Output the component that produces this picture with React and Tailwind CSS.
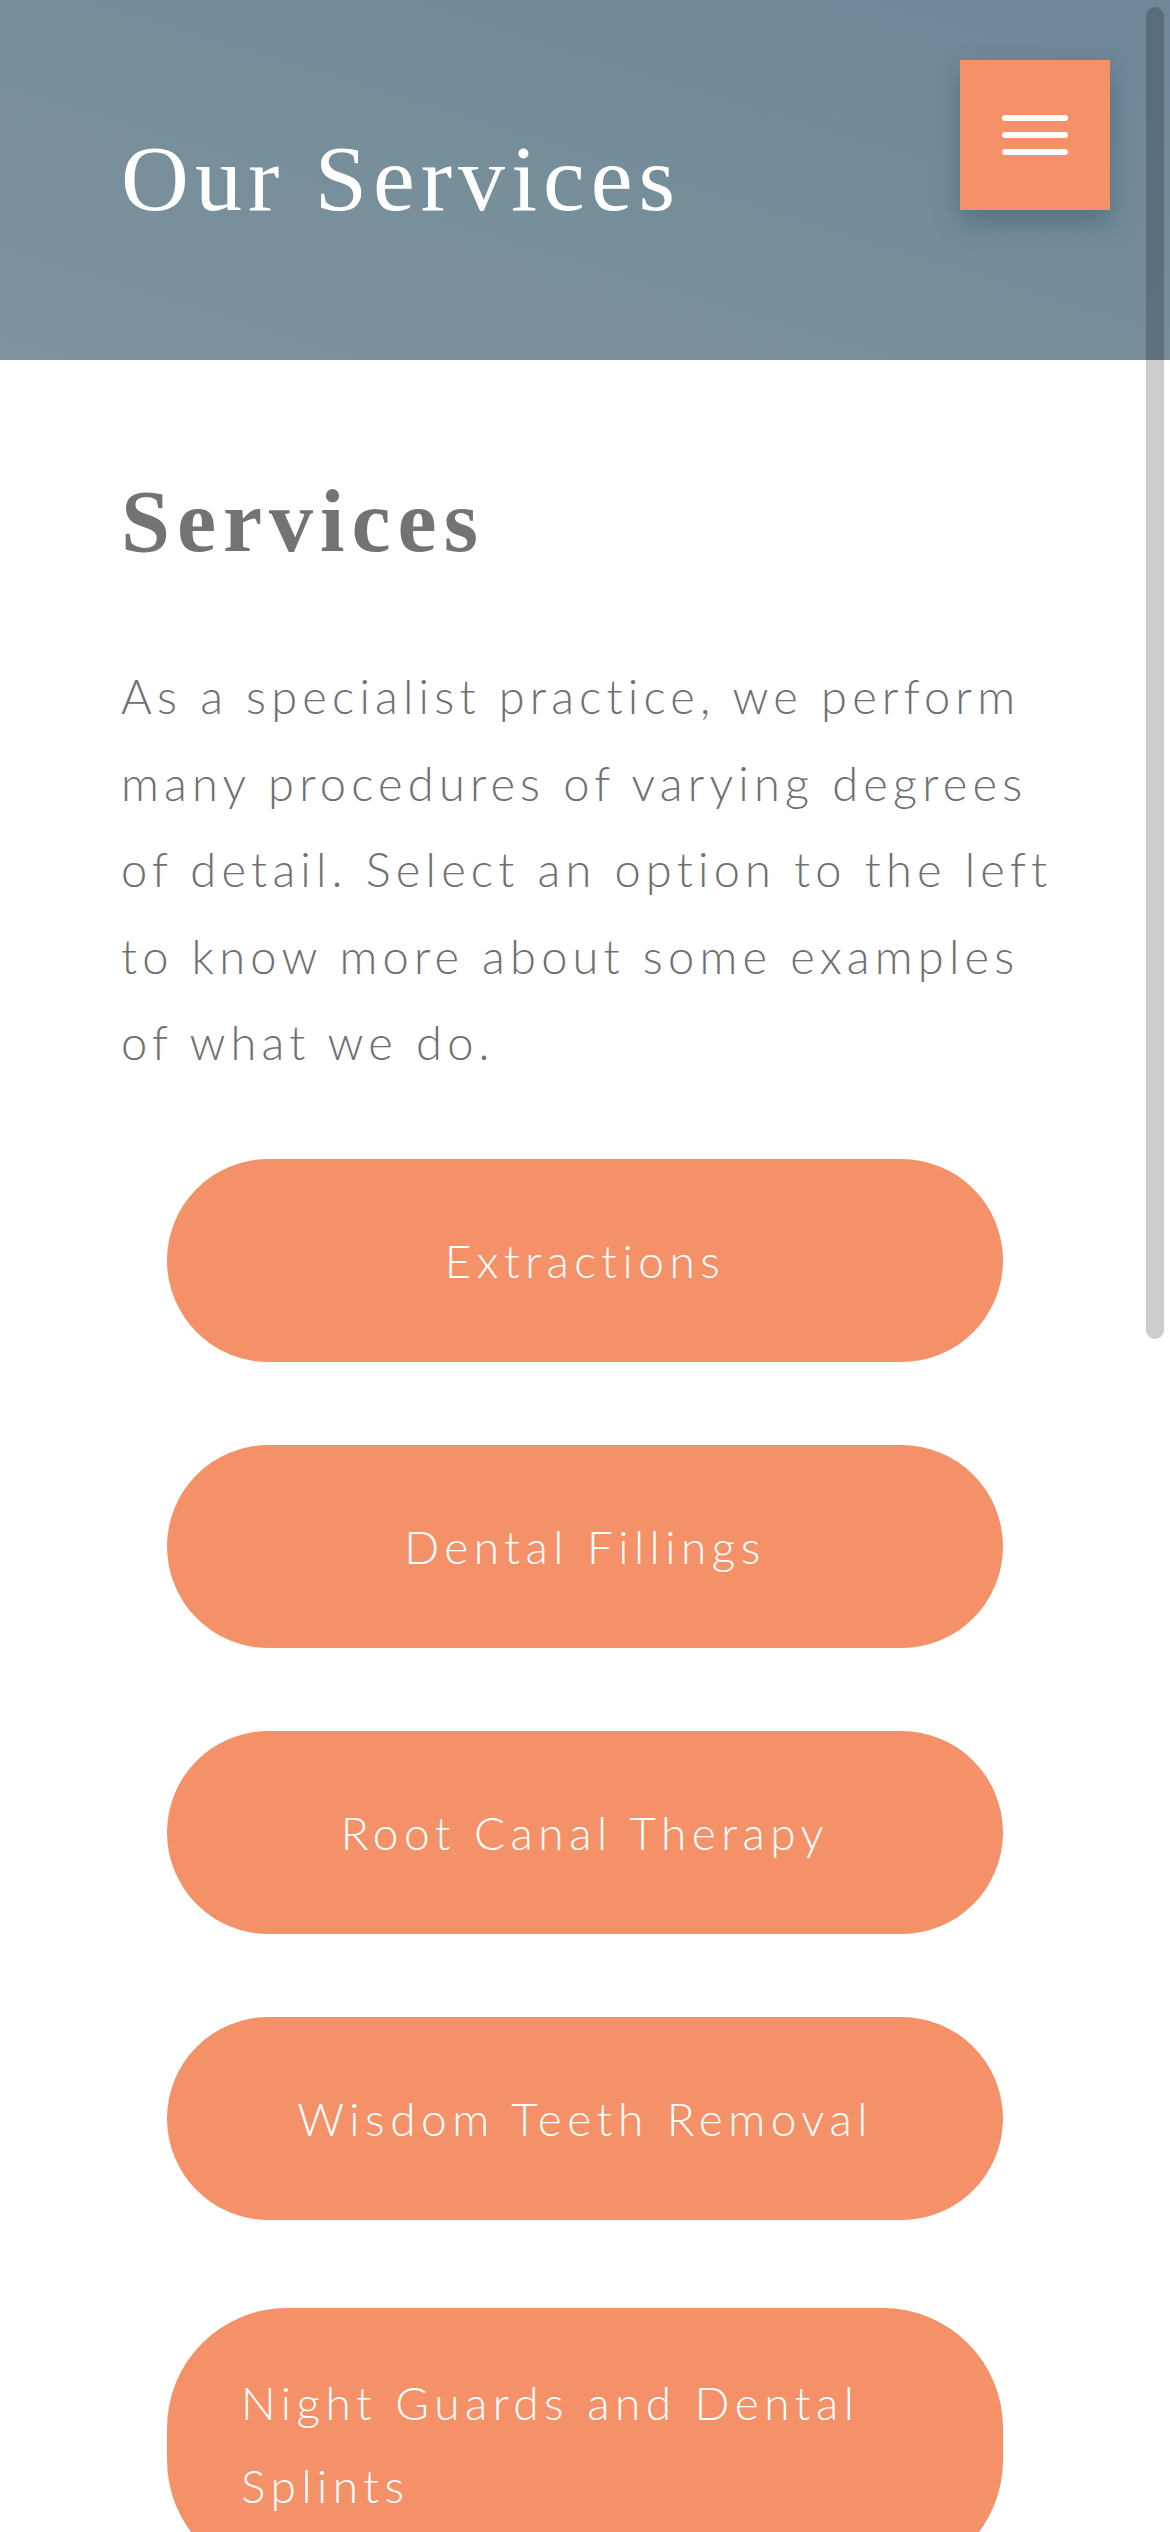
import React from 'react';

const services = [
  'Extractions',
  'Dental Fillings',
  'Root Canal Therapy',
  'Wisdom Teeth Removal',
  'Night Guards and Dental Splints',
];

function MenuButton() {
  return (
    <button className="absolute left-[960px] top-[60px] w-[150px] h-[150px] bg-[#f59168] flex flex-col items-center justify-center gap-[11px] shadow-[0_12px_24px_rgba(40,60,75,0.35)]">
      <span className="block w-[66px] h-[6px] rounded-full bg-white" />
      <span className="block w-[66px] h-[6px] rounded-full bg-white" />
      <span className="block w-[66px] h-[6px] rounded-full bg-white" />
    </button>
  );
}

export default function App() {
  return (
    <div className="relative h-[2532px] overflow-hidden bg-white">
      <header className="relative h-[360px] flex items-center px-[121px] bg-gradient-to-tr from-[#7d949f] via-[#768d9a] to-[#6e8799]">
        <h1 className="text-[94px] leading-none tracking-[6px] text-white font-normal [font-family:'Liberation_Serif',serif] -mt-[4px]">
          Our Services
        </h1>
        <MenuButton />
      </header>

      <main className="px-[121px] pt-[118px]">
        <h2 className="text-[88px] leading-none font-bold tracking-[7px] text-[#737373] [font-family:'Liberation_Serif',serif]">
          Services
        </h2>
        <p className="w-[950px] mt-[87px] text-[47px] leading-[86.5px] tracking-[5.2px] font-light text-[#707070] [font-family:Lato,sans-serif]">
          As a specialist practice, we perform many procedures of varying degrees of detail. Select an option to the left to know more about some examples of what we do.
        </p>

        <div className="mt-[73px] mx-[46px] flex flex-col gap-[83px]">
          {services.map((s) => (
            <button
              key={s}
              className="min-h-[203px] rounded-[120px] bg-[#f59168] px-[74px] py-[53px] flex items-center justify-center last:mt-[5px]"
            >
              <span className="text-[46px] leading-[83px] tracking-[5.5px] font-light text-white text-left [font-family:Lato,sans-serif]">
                {s}
              </span>
            </button>
          ))}
        </div>
      </main>

      <div className="absolute right-[6px] top-[7px] w-[18px] h-[1332px] rounded-full bg-black/20" />
    </div>
  );
}
